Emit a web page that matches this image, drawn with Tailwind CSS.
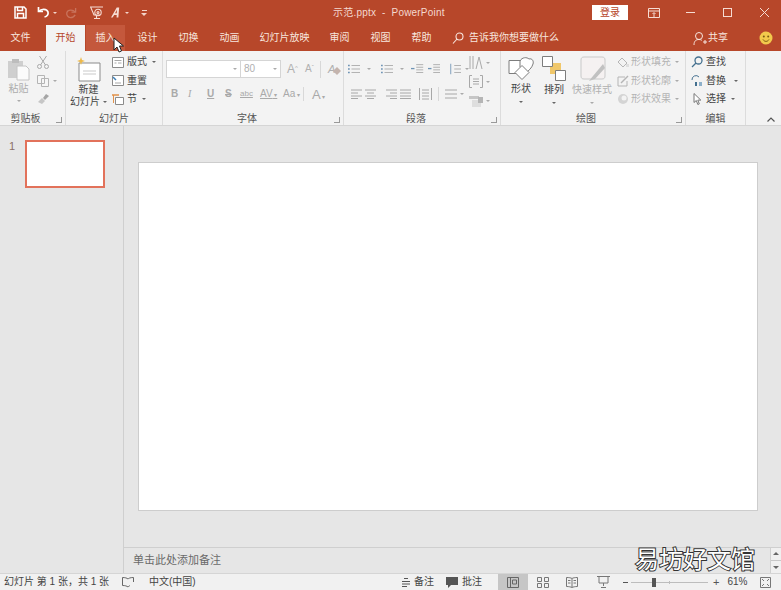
<!DOCTYPE html>
<html lang="zh">
<head>
  <meta charset="UTF-8" />
  <title>示范.pptx - PowerPoint</title>
  <script src="https://cdn.jsdelivr.net/npm/@tailwindcss/browser@4"></script>
</head>
<body class="w-[781px] h-[590px] overflow-hidden relative flex flex-col bg-[#e6e6e6] text-[10px] leading-none text-[#444] font-['Liberation_Sans','Noto_Sans_CJK_SC',sans-serif]">

  <!-- title bar -->
  <div class="h-[25px] bg-[#b7472a] text-white flex items-center shrink-0">
    <div class="w-[316px] flex items-center">
      <svg class="ml-[14px] w-[13px] h-[13px]" viewBox="0 0 13 13" fill="none" stroke="#fff" stroke-width="1.5"><path d="M1 1h9l2 2v9H1z"/><path d="M3.5 1v3.5h5V1M3.5 12V7.5h6V12"/></svg>
      <svg class="ml-[10px] w-[13px] h-[13px]" viewBox="0 0 13 13" fill="none" stroke="#fff" stroke-width="1.7"><path d="M1.5 1v4.5H6"/><path d="M2 5.5C4 2.5 10 2.5 11 6c.6 2.5-1 4.5-3.5 5"/></svg>
      <span class="ml-[3px] w-0 h-0 border-x-[2px] border-x-transparent border-t-[2px] border-t-[#f3d5cb]"></span>
      <svg class="ml-[8px] w-[12px] h-[12px]" viewBox="0 0 13 13" fill="none" stroke="#c9735c" stroke-width="1.4"><path d="M11.5 1v4.5H7"/><path d="M11 5.5C9 2.5 3 2.5 2 6c-.6 2.5 1 5 4 5.5 2 0 4-1 5-3"/></svg>
      <svg class="ml-[12px] w-[15px] h-[15px]" viewBox="0 0 15 15" fill="none" stroke="#f6dcd3" stroke-width="1.1"><path d="M1 2h13M2 2v1l3 7h6"/><circle cx="9" cy="7.5" r="3.2"/><circle cx="9" cy="7.5" r="1"/><path d="M5 13.5h6M7.5 11v2.5"/></svg>
      <svg class="ml-[7px] w-[9px] h-[11px]" viewBox="0 0 11 12" fill="#f6dcd3"><path d="M7 0h3l-1 12H6.800l.2-3H4l-2 3H0zM7.300 2.500 5 7h2z"/></svg>
      <span class="ml-[5px] w-0 h-0 border-x-[2px] border-x-transparent border-t-[2px] border-t-[#f3d5cb]"></span>
      <span class="ml-[12px] flex flex-col items-center gap-[2px]"><span class="w-[5px] h-px bg-[#f3d5cb]"></span><span class="w-0 h-0 border-x-[3px] border-x-transparent border-t-[3px] border-t-[#f3d5cb]"></span></span>
    </div>
    <div class="ml-[17px] w-[259px] text-[10px] text-[#f4d9d0] tracking-[0.2px] whitespace-pre">示范.pptx  -  PowerPoint</div>
    <div class="w-[36px] h-[15px] bg-white text-[#b7472a] flex items-center justify-center">登录</div>
    <svg class="ml-[20px] w-[12px] h-[10px]" viewBox="0 0 12 10" fill="none" stroke="#f6dcd3"><path d="M.5.500h11v9H.5zM.5 3h11M6 9V5M4.500 6 6 4.500 7.500 6"/></svg>
    <span class="ml-[26px] w-[9px] h-px bg-[#f6dcd3]"></span>
    <span class="ml-[28px] w-[9px] h-[9px] border border-[#f6dcd3]"></span>
    <svg class="ml-[28px] w-[9px] h-[9px]" viewBox="0 0 9 9" stroke="#f6dcd3"><path d="M0 0l9 9M9 0 0 9"/></svg>
  </div>

  <!-- tabs -->
  <div class="h-[26px] bg-[#b7472a] text-[#f8e6df] flex items-stretch shrink-0">
    <div class="w-[41px] flex items-center justify-center">文件</div>
    <div class="ml-[5px] w-[39px] bg-[#f3f3f3] text-[#b7472a] flex items-center justify-center">开始</div>
    <div class="ml-px w-[39px] bg-[#c4583c] flex items-center justify-center">插入</div>
    <div class="ml-[2px] w-[41px] flex items-center justify-center">设计</div>
    <div class="w-[41px] flex items-center justify-center">切换</div>
    <div class="w-[41px] flex items-center justify-center">动画</div>
    <div class="w-[69px] flex items-center justify-center">幻灯片放映</div>
    <div class="w-[41px] flex items-center justify-center">审阅</div>
    <div class="w-[41px] flex items-center justify-center">视图</div>
    <div class="w-[41px] flex items-center justify-center">帮助</div>
    <div class="ml-[10px] flex items-center">
      <svg class="w-[12px] h-[12px]" viewBox="0 0 12 12" fill="none" stroke="#f8e6df" stroke-width="1.1"><circle cx="7.500" cy="4.500" r="3.500"/><path d="M5 7 1 11.500"/></svg>
      <span class="ml-[5px] w-[87px] whitespace-nowrap">告诉我你想要做什么</span>
    </div>
    <div class="ml-[137px] flex items-center">
      <svg class="w-[14px] h-[15px]" viewBox="0 0 14 15" fill="none" stroke="#f8e6df"><circle cx="6" cy="5" r="3.500"/><path d="M1 14c0-4 2-5.500 5-5.500 1 0 2 .3 2.800.8M10 11h4M12 9v4"/></svg>
      <span class="ml-px">共享</span>
    </div>
    <div class="ml-[31px] flex items-center">
      <svg class="w-[14px] h-[14px]" viewBox="0 0 14 14"><circle cx="7" cy="7" r="6.500" fill="#f2c94c"/><circle cx="4.800" cy="5.500" r="1" fill="#7a5a10"/><circle cx="9.200" cy="5.500" r="1" fill="#7a5a10"/><path d="M4 8.500c1.500 2.500 4.500 2.500 6 0" fill="none" stroke="#7a5a10"/></svg>
    </div>
  </div>

  <!-- ribbon -->
  <div class="h-[75px] bg-[#f3f3f3] border-b border-[#d5d5d5] flex shrink-0 relative">
    <!-- clipboard -->
    <div class="w-[66px] border-r border-[#dcdcdc] flex flex-col">
      <div class="h-[63px] flex">
        <div class="w-[37px] flex flex-col items-center pt-[6px] text-[#adadad]">
          <svg class="w-[24px] h-[24px]" viewBox="0 0 24 24" fill="none"><path d="M1 4h15v17H1z" fill="#cfcfcf"/><path d="M5 2h7v4H5z" fill="#bdbdbd"/><path d="M10 9h9l3 3v11H10z" fill="#fbfbfb" stroke="#c4c4c4"/></svg>
          <span class="mt-[3px]">粘贴</span>
          <span class="mt-[6px] w-0 h-0 border-x-[2px] border-x-transparent border-t-[2px] border-t-[#aaa]"></span>
        </div>
        <div class="flex flex-col items-start pt-[5px] gap-[6px]">
          <svg class="w-[12px] h-[13px]" viewBox="0 0 12 13" fill="none" stroke="#a9a9a9"><circle cx="2.500" cy="10.500" r="2"/><circle cx="9.500" cy="10.500" r="2"/><path d="M3.500 9 9.500 0M8.500 9 2.500 0"/></svg>
          <div class="flex items-center gap-[4px]">
            <svg class="w-[12px] h-[12px]" viewBox="0 0 12 12" fill="#f6f6f6" stroke="#b4b4b4"><path d="M.5.500h7v8h-7zM4.500 3.500h7v8h-7z"/></svg>
            <span class="w-0 h-0 border-x-[2px] border-x-transparent border-t-[2px] border-t-[#aaa]"></span>
          </div>
          <svg class="w-[12px] h-[11px]" viewBox="0 0 12 11"><path d="M6 5l3-4 3 2-4 4z" fill="#a5a5a5"/><path d="M1 9l4-4 3 3-3 3z" fill="#c6c6c6"/></svg>
        </div>
      </div>
      <div class="relative flex-1 flex items-start justify-center text-[#555]"><span class="mr-[14px]">剪贴板</span><span class="absolute right-[3px] top-[3px] w-[6px] h-[6px] border-r border-b border-[#999]"></span></div>
    </div>

    <!-- slides -->
    <div class="w-[97px] border-r border-[#dcdcdc] flex flex-col">
      <div class="h-[63px] flex">
        <div class="w-[45px] flex flex-col items-center pt-[6px]">
          <svg class="w-[25px] h-[25px]" viewBox="0 0 25 25" fill="none"><path d="M3 6h21v18H3z" fill="#fff" stroke="#8b8b8b"/><path d="M7 14h13M7 17h13" stroke="#c9c9c9"/><path d="M5 0l1 3 3 1-3 1-1 3-1-3-3-1 3-1z" fill="#eeb948"/></svg>
          <span class="mt-[3px]">新建</span>
          <span class="mt-[2px] whitespace-nowrap">幻灯片 <span class="inline-block align-middle w-0 h-0 border-x-[2px] border-x-transparent border-t-[2px] border-t-[#666]"></span></span>
        </div>
        <div class="flex flex-col pt-[5px] gap-[6.500px] ml-px">
          <div class="flex items-center h-[12px] gap-[3px]"><svg class="w-[12px] h-[11px]" viewBox="0 0 12 11" fill="#fff" stroke="#8b8b8b"><path d="M.5.500h11v10H.5z"/><path d="M2.500 3.500h7M2.500 6h2M6 6h3.500" stroke="#a8a8a8"/></svg><span>版式</span><span class="ml-[2px] w-0 h-0 border-x-[2px] border-x-transparent border-t-[2px] border-t-[#666]"></span></div>
          <div class="flex items-center h-[12px] gap-[3px]"><svg class="w-[12px] h-[11px]" viewBox="0 0 12 11" fill="#fff" stroke="#8b8b8b"><path d="M.5.500h11v10H.5z"/><path d="M1 2l3 3" stroke="#3f7fb5" stroke-width="1.500"/><path d="M3 8h6" stroke="#a8a8a8"/></svg><span>重置</span></div>
          <div class="flex items-center h-[12px] gap-[3px]"><svg class="w-[12px] h-[11px]" viewBox="0 0 12 11" fill="none"><path d="M3.500 3.500h8v7h-8z" fill="#fff" stroke="#8b8b8b"/><path d="M0 1h7" stroke="#e2924a" stroke-width="1.500"/><path d="M1.500 1v8" stroke="#e2924a"/></svg><span>节</span><span class="ml-[2px] w-0 h-0 border-x-[2px] border-x-transparent border-t-[2px] border-t-[#666]"></span></div>
        </div>
      </div>
      <div class="flex-1 flex justify-center text-[#555]">幻灯片</div>
    </div>

    <!-- font -->
    <div class="w-[181px] border-r border-[#dcdcdc] flex flex-col relative">
      <div class="h-[63px] pl-[3px] flex flex-col">
        <div class="mt-[9px] h-[18px] flex items-center text-[#b0b0b0]">
          <div class="w-[75px] h-[18px] bg-white border border-[#d5d5d5] flex items-center justify-end pr-[3px]"><span class="w-0 h-0 border-x-[2px] border-x-transparent border-t-[2px] border-t-[#aaa]"></span></div>
          <div class="w-[40px] h-[18px] bg-white border border-l-0 border-[#d5d5d5] flex items-center justify-between px-[3px] text-[10px]">80<span class="w-0 h-0 border-x-[2px] border-x-transparent border-t-[2px] border-t-[#aaa]"></span></div>
          <span class="ml-[6px] w-[18px] text-[12px]">A<sup class="text-[6px]">^</sup></span>
          <span class="w-[13px] text-[10px]">A<sup class="text-[6px]">ˇ</sup></span>
          <span class="ml-[2px] w-px h-[17px] bg-[#d8d8d8]"></span>
          <span class="ml-[7px] flex items-center text-[11px] italic">A<svg class="-ml-[2px] mt-[3px] w-[8px] h-[8px]" viewBox="0 0 8 8"><path d="M4 0l4 4-4 4-4-4z" fill="#c4b4ad"/></svg></span>
        </div>
        <div class="mt-[9px] h-[14px] flex items-center text-[#a9a9a9] font-bold">
          <span class="ml-[5px] w-[17px]">B</span><span class="w-[19px] italic font-normal font-['Liberation_Serif',serif]">I</span><span class="w-[18px] underline">U</span><span class="w-[15px] line-through">S</span><span class="w-[20px] text-[8px] font-normal underline">abc</span><span class="w-[23px] font-normal underline">AV<span class="text-[6px] no-underline"> ▾</span></span><span class="w-[20px] font-normal">Aa<span class="text-[6px]"> ▾</span></span><span class="w-px h-[14px] bg-[#d8d8d8]"></span><span class="ml-[8px] text-[13px] font-normal">A<span class="text-[6px]"> ▾</span></span>
        </div>
      </div>
      <div class="flex-1 flex justify-center pr-[12px] text-[#555]">字体</div>
      <span class="absolute right-[3px] bottom-[2px] w-[6px] h-[6px] border-r border-b border-[#999]"></span>
    </div>

    <!-- paragraph -->
    <div class="w-[157px] border-r border-[#dcdcdc] flex flex-col relative">
      <div class="h-[63px] flex pl-[7px]">
        <div class="w-[118px] flex flex-col">
          <div class="mt-[12px] h-[12px] flex items-center gap-[7px] -ml-[3px]">
            <svg class="w-[14px] h-[12px]" viewBox="0 0 14 12" stroke="#a8a8a8"><path d="M4 2h10M4 6h10M4 10h10"/><path d="M0 2h2M0 6h2M0 10h2" stroke="#6f94b5" stroke-width="1.500"/></svg><span class="w-0 h-0 border-x-[2px] border-x-transparent border-t-[2px] border-t-[#aaa]"></span>
            <svg class="ml-[3px] w-[14px] h-[12px]" viewBox="0 0 14 12" stroke="#a8a8a8"><path d="M4 2h10M4 6h10M4 10h10"/><path d="M0 2h2M0 6h2M0 10h2" stroke="#6f94b5" stroke-width="1.500"/></svg><span class="w-0 h-0 border-x-[2px] border-x-transparent border-t-[2px] border-t-[#aaa]"></span>
            <svg class="w-[14px] h-[12px]" viewBox="0 0 14 12" stroke="#a8a8a8"><path d="M6 1h8M6 4h8M6 7h8M6 10h8"/><path d="M4 5.500H0" stroke="#6f94b5" stroke-width="1.500"/></svg>
            <svg class="-ml-[3px] w-[14px] h-[12px]" viewBox="0 0 14 12" stroke="#a8a8a8"><path d="M6 1h8M6 4h8M6 7h8M6 10h8"/><path d="M0 5.500h4" stroke="#6f94b5" stroke-width="1.500"/></svg>
            <svg class="ml-[2px] w-[14px] h-[12px]" viewBox="0 0 14 12" stroke="#a8a8a8"><path d="M6 2h8M6 6h8M6 10h8"/><path d="M2 0v12" stroke="#6f94b5"/></svg><span class="-ml-[3px] w-0 h-0 border-x-[2px] border-x-transparent border-t-[2px] border-t-[#aaa]"></span>
          </div>
          <div class="mt-[13px] h-[12px] flex items-center gap-[3px]">
            <svg class="w-[11px] h-[10px]" viewBox="0 0 11 10" stroke="#a8a8a8"><path d="M0 1h11M0 4h7M0 7h11M0 9.500h7"/></svg>
            <svg class="w-[11px] h-[10px]" viewBox="0 0 11 10" stroke="#a8a8a8"><path d="M0 1h11M2 4h7M0 7h11M2 9.500h7"/></svg>
            <svg class="ml-[7px] w-[11px] h-[10px]" viewBox="0 0 11 10" stroke="#a8a8a8"><path d="M0 1h11M4 4h7M0 7h11M4 9.500h7"/></svg>
            <svg class="w-[11px] h-[10px]" viewBox="0 0 11 10" stroke="#a8a8a8"><path d="M0 1h11M0 4h11M0 7h11M0 9.500h11"/></svg>
            <svg class="ml-[5px] w-[13px] h-[12px]" viewBox="0 0 13 12" stroke="#a8a8a8" fill="none"><path d="M.5 0v12M12.500 0v12M3 2h7M3 5h7M3 8h7M3 11h7"/></svg>
            <span class="ml-[3px] w-px h-[14px] bg-[#d8d8d8]"></span>
            <svg class="ml-[3px] w-[12px] h-[10px]" viewBox="0 0 12 10" stroke="#a8a8a8"><path d="M0 1h12M0 5h12M0 9h12"/></svg><span class="w-0 h-0 border-x-[2px] border-x-transparent border-t-[2px] border-t-[#aaa]"></span>
          </div>
        </div>
        <div class="flex flex-col pt-[5px] gap-[6px]">
          <div class="flex items-center gap-[3px] h-[13px]"><svg class="w-[14px] h-[13px]" viewBox="0 0 14 13" stroke="#a8a8a8" fill="none"><path d="M1 0v13M4 0v13M7 13 10 1l3 12"/></svg><span class="w-0 h-0 border-x-[2px] border-x-transparent border-t-[2px] border-t-[#aaa]"></span></div>
          <div class="flex items-center gap-[3px] h-[13px]"><svg class="w-[14px] h-[13px]" viewBox="0 0 14 13" stroke="#a8a8a8" fill="none"><path d="M3 .5H.5v12H3M11 .5h2.500v12H11M4 4h6M4 6.500h6M4 9h6"/></svg><span class="w-0 h-0 border-x-[2px] border-x-transparent border-t-[2px] border-t-[#aaa]"></span></div>
          <div class="flex items-center gap-[3px] h-[13px]"><svg class="w-[14px] h-[13px]" viewBox="0 0 14 13"><path d="M0 2h10v3H0z" fill="#c6c6c6"/><path d="M3 6h9v7H3z" fill="#dedede"/><path d="M9 3h5v6H9z" fill="#b5b5b5"/></svg><span class="w-0 h-0 border-x-[2px] border-x-transparent border-t-[2px] border-t-[#aaa]"></span></div>
        </div>
      </div>
      <div class="flex-1 flex justify-center pr-[12px] text-[#555]">段落</div>
      <span class="absolute right-[3px] bottom-[2px] w-[6px] h-[6px] border-r border-b border-[#999]"></span>
    </div>

    <!-- drawing -->
    <div class="w-[185px] border-r border-[#dcdcdc] flex flex-col relative">
      <div class="h-[63px] flex">
        <div class="ml-[6px] w-[28px] flex flex-col items-center pt-[6px]">
          <svg class="w-[26px] h-[24px]" viewBox="0 0 26 24" fill="#fff" stroke="#7d7d7d"><path d="M1 3.500h15v13H1z"/><path d="M12 4C14 0 19 0 21 2c3-1 5 2 4 5-1 4-5 7-7 9L12 10z"/><path d="M14 8.500l7 7-7 7-7-7z"/></svg>
          <span class="mt-[3px]">形状</span>
          <span class="mt-[7px] w-0 h-0 border-x-[2px] border-x-transparent border-t-[2px] border-t-[#666]"></span>
        </div>
        <div class="ml-[5px] w-[28px] flex flex-col items-center pt-[5px]">
          <svg class="w-[24px] h-[25px]" viewBox="0 0 24 25"><path d="M8 7h11v11H8z" fill="#f0c76a"/><path d="M.5.500h10v10H.5z" fill="#fff" stroke="#7d7d7d"/><path d="M13.500 14.500h10v10h-10z" fill="#fff" stroke="#7d7d7d"/></svg>
          <span class="mt-[4px]">排列</span>
          <span class="mt-[7px] w-0 h-0 border-x-[2px] border-x-transparent border-t-[2px] border-t-[#666]"></span>
        </div>
        <div class="ml-[3px] w-[42px] flex flex-col items-center pt-[5px] text-[#b0b0b0]">
          <svg class="w-[27px] h-[27px]" viewBox="0 0 27 27" fill="none"><path d="M5 1h18c2 0 3 1 3 3v16c0 2-1 3-3 3H5c-2 0-3-1-3-3V4c0-2 1-3 3-3z" fill="#f5f1f1" stroke="#c9c9c9"/><path d="M24 8 14 20l-4 5 6-2 10-11z" fill="#c1c1c1"/></svg>
          <span class="mt-[2px] whitespace-nowrap">快速样式</span>
          <span class="mt-[7px] w-0 h-0 border-x-[2px] border-x-transparent border-t-[2px] border-t-[#aaa]"></span>
        </div>
        <div class="ml-[4px] flex flex-col pt-[5px] gap-[6.500px] text-[#b3b3b3]">
          <div class="flex items-center h-[12px] gap-[2px]"><svg class="w-[12px] h-[12px]" viewBox="0 0 12 12"><path d="M1 6 5 2l5 5-4 4z" fill="#f2f2f2" stroke="#b5b5b5"/><path d="M9 8h3v3H9z" fill="#dedede"/></svg><span>形状填充</span><span class="ml-[2px] w-0 h-0 border-x-[2px] border-x-transparent border-t-[2px] border-t-[#aaa]"></span></div>
          <div class="flex items-center h-[12px] gap-[2px]"><svg class="w-[12px] h-[12px]" viewBox="0 0 12 12" fill="none" stroke="#b5b5b5"><path d="M1 2h7M1 2v9h9V6"/><path d="M4 8l7-7" stroke-width="1.500"/></svg><span>形状轮廓</span><span class="ml-[2px] w-0 h-0 border-x-[2px] border-x-transparent border-t-[2px] border-t-[#aaa]"></span></div>
          <div class="flex items-center h-[12px] gap-[2px]"><svg class="w-[12px] h-[12px]" viewBox="0 0 12 12"><circle cx="6" cy="6" r="5" fill="#d4d4d4"/><circle cx="7" cy="5" r="2.500" fill="#f3f3f3"/></svg><span>形状效果</span><span class="ml-[2px] w-0 h-0 border-x-[2px] border-x-transparent border-t-[2px] border-t-[#aaa]"></span></div>
        </div>
      </div>
      <div class="flex-1 flex justify-center pr-[14px] text-[#555]">绘图</div>
      <span class="absolute right-[3px] bottom-[2px] w-[6px] h-[6px] border-r border-b border-[#999]"></span>
    </div>

    <!-- editing -->
    <div class="w-[60px] border-r border-[#dcdcdc] flex flex-col">
      <div class="h-[63px] flex flex-col pt-[5px] gap-[6.500px] pl-[5px]">
        <div class="flex items-center h-[12px] gap-[3px]"><svg class="w-[12px] h-[12px]" viewBox="0 0 12 12" fill="none" stroke="#44708f" stroke-width="1.300"><circle cx="7.500" cy="4.500" r="3.500"/><path d="M5 7 1 11"/></svg><span>查找</span></div>
        <div class="flex items-center h-[12px] gap-[3px]"><svg class="w-[12px] h-[12px]" viewBox="0 0 12 12"><path d="M1 5a4 4 0 0 1 7-3" fill="none" stroke="#44708f"/><path d="M4 7h2v4H4z" fill="#44708f"/><path d="M8 7h3v4H8z" fill="#8db0ca"/></svg><span>替换</span><span class="ml-[5px] w-0 h-0 border-x-[2px] border-x-transparent border-t-[2px] border-t-[#666]"></span></div>
        <div class="flex items-center h-[12px] gap-[3px]"><svg class="w-[12px] h-[12px]" viewBox="0 0 12 12" fill="#fff" stroke="#777"><path d="M3 .5v9l2.300-2 1.500 4 1.500-.6-1.500-3.800h3z"/></svg><span>选择</span><span class="ml-[2px] w-0 h-0 border-x-[2px] border-x-transparent border-t-[2px] border-t-[#666]"></span></div>
      </div>
      <div class="flex-1 flex justify-center text-[#555]">编辑</div>
    </div>

    <svg class="absolute right-[6px] bottom-[3px] w-[8px] h-[5px]" viewBox="0 0 8 5" fill="none" stroke="#555" stroke-width="1.200"><path d="M.5 4.500 4 1l3.500 3.500"/></svg>
  </div>

  <!-- workspace -->
  <div class="flex-1 flex min-h-0">
    <div class="w-[124px] border-r border-[#cfcfcf] flex items-start pt-[14px] shrink-0">
      <span class="ml-[9px] w-[16px] mt-px text-[11px] text-[#8a7068]">1</span>
      <div class="w-[80px] h-[48px] bg-white border-2 border-[#e2725b]"></div>
    </div>
    <div class="flex-1 flex flex-col min-w-0">
      <div class="flex-1 pt-[36px] pl-[14px]">
        <div class="w-[620px] h-[349px] bg-white border border-[#cdcdcd]"></div>
      </div>
      <div class="h-[26px] border-t border-[#cfcfcf] flex items-center pl-[9px] text-[11px] text-[#6a6a6a] relative">
        单击此处添加备注
        <div class="absolute right-0 top-0 w-[11px] h-full bg-[#f0f0f0] border-l border-[#d0d0d0] flex flex-col items-center justify-between py-[4px]">
          <span class="w-0 h-0 border-x-[3px] border-x-transparent border-b-[3px] border-b-[#666]"></span>
          <span class="w-full h-px bg-[#c8c8c8]"></span>
          <span class="w-0 h-0 border-x-[3px] border-x-transparent border-t-[3px] border-t-[#666]"></span>
        </div>
      </div>
    </div>
  </div>

  <!-- status bar -->
  <div class="h-[17px] bg-[#f1f1f1] border-t border-[#d5d5d5] flex items-center shrink-0 text-[#444]">
    <span class="ml-[4px] w-[106px] whitespace-nowrap">幻灯片 第 1 张，共 1 张</span>
    <svg class="ml-[12px] w-[12px] h-[11px]" viewBox="0 0 12 11" fill="none" stroke="#666"><path d="M6 2C5 1 3 .5.500.5v8C3 8.500 5 9 6 10c1-1 2-1.500 2-1.500M6 2c.6-.6 2-1.500 5.500-1.500V5"/></svg>
    <span class="ml-[15px] w-[60px] whitespace-nowrap">中文(中国)</span>
    <div class="ml-[192px] flex items-center h-full">
      <svg class="w-[10px] h-[10px]" viewBox="0 0 10 10" stroke="#555"><path d="M3 1.500h4M1 4.500h8M1 7h8M1 9.500h5"/></svg>
      <span class="ml-[3px] w-[20px]">备注</span>
      <svg class="ml-[12px] w-[12px] h-[11px]" viewBox="0 0 12 11" fill="#555"><path d="M0 0h12v8H5l-3 3V8H0z"/></svg>
      <span class="ml-[4px] w-[20px]">批注</span>
      <div class="ml-[16px] w-[30px] h-full bg-[#c6c6c6] flex items-center justify-center"><svg class="w-[12px] h-[11px]" viewBox="0 0 12 11" fill="none" stroke="#666"><path d="M.5.500h11v10H.5zM3.500.500v10M5.500 3h4v4h-4z"/></svg></div>
      <svg class="ml-[9px] w-[12px] h-[11px]" viewBox="0 0 12 11" fill="none" stroke="#777"><path d="M.5.500h4v4h-4zM7.500.500h4v4h-4zM.5 6.500h4v4h-4zM7.500 6.500h4v4h-4z"/></svg>
      <svg class="ml-[17px] w-[12px] h-[11px]" viewBox="0 0 12 11" fill="none" stroke="#777"><path d="M6 1.500C5 .8 3 .5.500.5v9C3 9.500 5 10 6 10.500c1-.5 3-1 5.500-1v-9C9 .5 7 .8 6 1.500zm0 0v9M2 3.500h2.500M2 6h2.500M7.500 3.500H10M7.500 6H10"/></svg>
      <svg class="ml-[19px] w-[13px] h-[12px]" viewBox="0 0 13 12" fill="none" stroke="#777"><path d="M0 .5h13M2 .5v6.500h9V.5M6.500 7v3M4 11.500h5"/></svg>
      <span class="ml-[13px] w-[5px] h-px bg-[#555]"></span>
      <div class="ml-[3px] w-[77px] h-px bg-[#bdbdbd] relative"><span class="absolute left-[21px] -top-[4px] w-[4px] h-[9px] bg-[#555]"></span><span class="absolute left-[38px] -top-[1px] w-px h-[3px] bg-[#bdbdbd]"></span></div>
      <span class="ml-[5px] text-[11px] text-[#555]">+</span>
      <span class="ml-[8px] w-[22px]">61%</span>
      <svg class="ml-[11px] w-[11px] h-[11px]" viewBox="0 0 11 11" fill="none" stroke="#777"><path d="M.5.500h10v10H.5zM2 2l2 2M9 2 7 4M2 9l2-2M9 9 7 7"/></svg>
    </div>
  </div>

  <!-- watermark over the notes pane -->
  <div class="absolute left-[635px] top-[544px] text-[24px] leading-[28px] text-white font-['Noto_Sans_CJK_SC',sans-serif] [-webkit-text-stroke:2px_#333] [paint-order:stroke_fill]">易坊好文馆</div>

  <!-- mouse pointer -->
  <svg class="absolute left-[113px] top-[37px] w-[11px] h-[17px]" viewBox="0 0 11 17" fill="#fff" stroke="#222"><path d="M1 1v12l3-3 2 5 2.500-1-2-5h4z"/></svg>
</body>
</html>
